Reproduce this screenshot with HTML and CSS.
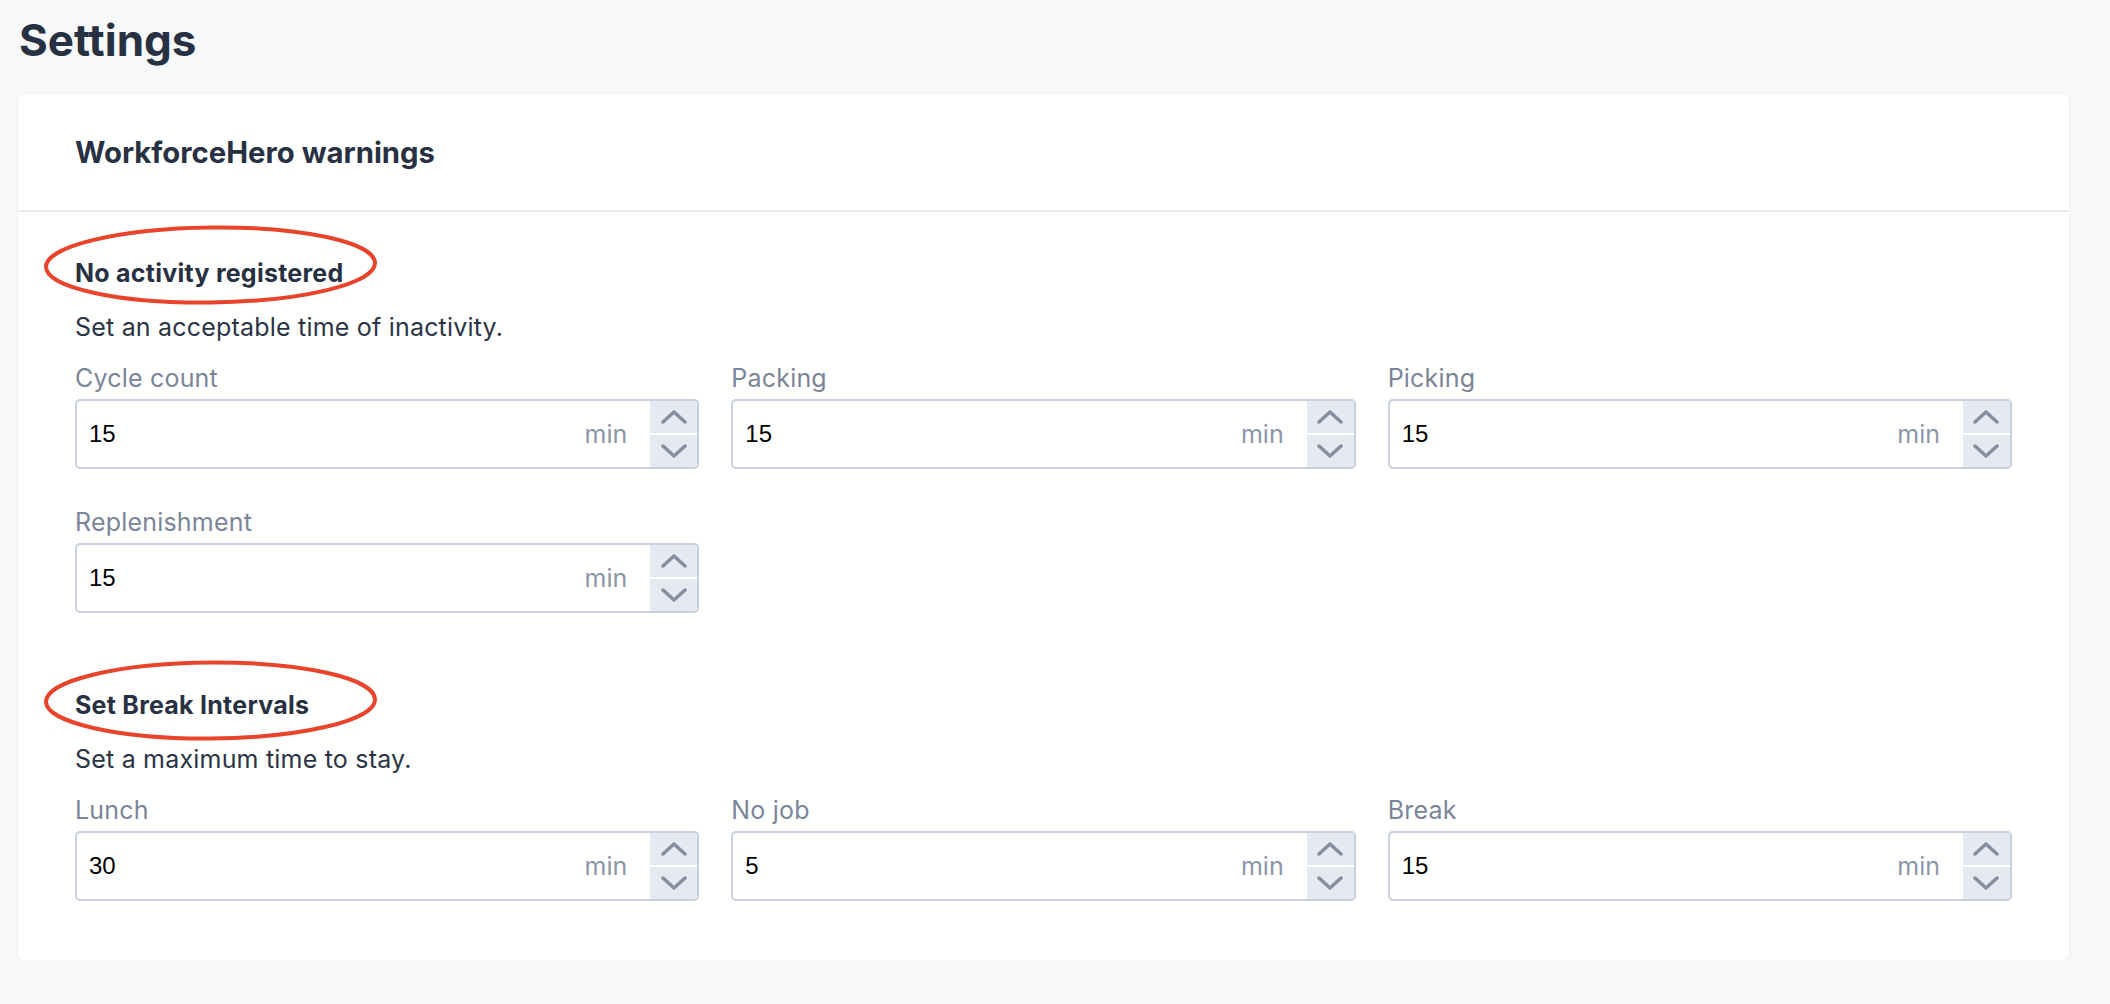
FILE: index.html
```html
<!DOCTYPE html>
<html lang="en">
<head>
<meta charset="utf-8">
<title>Settings</title>
<link rel="stylesheet" href="styles.css">
</head>
<body>
<div class="page">
  <h1 class="page-title">Settings</h1>
  <div class="card">
    <div class="card-header">
      <h2 class="card-title">WorkforceHero warnings</h2>
    </div>
    <div class="card-body">
      <section class="section">
        <div class="section-title-wrap">
          <h3 class="section-title">No activity registered</h3>
          <svg class="annot annot--a" width="333" height="80" viewBox="0 0 333 80"><ellipse cx="166.5" cy="40" rx="164.5" ry="37.5" fill="none" stroke="#e8442b" stroke-width="4"/></svg>
        </div>
        <p class="section-desc">Set an acceptable time of inactivity.</p>
        <div class="grid">
          <div class="field">
            <div class="field-label">Cycle count</div>
            <div class="input">
              <span class="input-value">15</span>
              <span class="input-unit">min</span>
              <div class="stepper">
                <div class="step"><svg width="26" height="14" viewBox="0 0 26 14"><path d="M2 12 L13 2 L24 12" fill="none" stroke="#868fa2" stroke-width="3.5" stroke-linecap="round" stroke-linejoin="round"/></svg></div>
                <div class="step"><svg width="26" height="14" viewBox="0 0 26 14"><path d="M2 2 L13 12 L24 2" fill="none" stroke="#868fa2" stroke-width="3.5" stroke-linecap="round" stroke-linejoin="round"/></svg></div>
              </div>
            </div>
          </div>
          <div class="field">
            <div class="field-label">Packing</div>
            <div class="input">
              <span class="input-value">15</span>
              <span class="input-unit">min</span>
              <div class="stepper">
                <div class="step"><svg width="26" height="14" viewBox="0 0 26 14"><path d="M2 12 L13 2 L24 12" fill="none" stroke="#868fa2" stroke-width="3.5" stroke-linecap="round" stroke-linejoin="round"/></svg></div>
                <div class="step"><svg width="26" height="14" viewBox="0 0 26 14"><path d="M2 2 L13 12 L24 2" fill="none" stroke="#868fa2" stroke-width="3.5" stroke-linecap="round" stroke-linejoin="round"/></svg></div>
              </div>
            </div>
          </div>
          <div class="field">
            <div class="field-label">Picking</div>
            <div class="input">
              <span class="input-value">15</span>
              <span class="input-unit">min</span>
              <div class="stepper">
                <div class="step"><svg width="26" height="14" viewBox="0 0 26 14"><path d="M2 12 L13 2 L24 12" fill="none" stroke="#868fa2" stroke-width="3.5" stroke-linecap="round" stroke-linejoin="round"/></svg></div>
                <div class="step"><svg width="26" height="14" viewBox="0 0 26 14"><path d="M2 2 L13 12 L24 2" fill="none" stroke="#868fa2" stroke-width="3.5" stroke-linecap="round" stroke-linejoin="round"/></svg></div>
              </div>
            </div>
          </div>
          <div class="field">
            <div class="field-label">Replenishment</div>
            <div class="input">
              <span class="input-value">15</span>
              <span class="input-unit">min</span>
              <div class="stepper">
                <div class="step"><svg width="26" height="14" viewBox="0 0 26 14"><path d="M2 12 L13 2 L24 12" fill="none" stroke="#868fa2" stroke-width="3.5" stroke-linecap="round" stroke-linejoin="round"/></svg></div>
                <div class="step"><svg width="26" height="14" viewBox="0 0 26 14"><path d="M2 2 L13 12 L24 2" fill="none" stroke="#868fa2" stroke-width="3.5" stroke-linecap="round" stroke-linejoin="round"/></svg></div>
              </div>
            </div>
          </div>
        </div>
      </section>

      <section class="section section--next">
        <div class="section-title-wrap">
          <h3 class="section-title">Set Break Intervals</h3>
          <svg class="annot annot--b" width="333" height="81" viewBox="0 0 333 81"><ellipse cx="166.5" cy="40.5" rx="164.5" ry="38" fill="none" stroke="#e8442b" stroke-width="4"/></svg>
        </div>
        <p class="section-desc">Set a maximum time to stay.</p>
        <div class="grid">
          <div class="field">
            <div class="field-label">Lunch</div>
            <div class="input">
              <span class="input-value">30</span>
              <span class="input-unit">min</span>
              <div class="stepper">
                <div class="step"><svg width="26" height="14" viewBox="0 0 26 14"><path d="M2 12 L13 2 L24 12" fill="none" stroke="#868fa2" stroke-width="3.5" stroke-linecap="round" stroke-linejoin="round"/></svg></div>
                <div class="step"><svg width="26" height="14" viewBox="0 0 26 14"><path d="M2 2 L13 12 L24 2" fill="none" stroke="#868fa2" stroke-width="3.5" stroke-linecap="round" stroke-linejoin="round"/></svg></div>
              </div>
            </div>
          </div>
          <div class="field">
            <div class="field-label">No job</div>
            <div class="input">
              <span class="input-value">5</span>
              <span class="input-unit">min</span>
              <div class="stepper">
                <div class="step"><svg width="26" height="14" viewBox="0 0 26 14"><path d="M2 12 L13 2 L24 12" fill="none" stroke="#868fa2" stroke-width="3.5" stroke-linecap="round" stroke-linejoin="round"/></svg></div>
                <div class="step"><svg width="26" height="14" viewBox="0 0 26 14"><path d="M2 2 L13 12 L24 2" fill="none" stroke="#868fa2" stroke-width="3.5" stroke-linecap="round" stroke-linejoin="round"/></svg></div>
              </div>
            </div>
          </div>
          <div class="field">
            <div class="field-label">Break</div>
            <div class="input">
              <span class="input-value">15</span>
              <span class="input-unit">min</span>
              <div class="stepper">
                <div class="step"><svg width="26" height="14" viewBox="0 0 26 14"><path d="M2 12 L13 2 L24 12" fill="none" stroke="#868fa2" stroke-width="3.5" stroke-linecap="round" stroke-linejoin="round"/></svg></div>
                <div class="step"><svg width="26" height="14" viewBox="0 0 26 14"><path d="M2 2 L13 12 L24 2" fill="none" stroke="#868fa2" stroke-width="3.5" stroke-linecap="round" stroke-linejoin="round"/></svg></div>
              </div>
            </div>
          </div>
        </div>
      </section>
    </div>
  </div>
</div>
</body>
</html>
```

FILE: styles.css
```css
* { box-sizing: border-box; }

html, body {
  margin: 0;
  padding: 0;
  background: #f7f8fa;
}

body {
  font-family: Inter, "Noto Sans", "Liberation Sans", sans-serif;
  color: #273142;
}

.page {
  padding: 0 41px 0 18px;
}

.page-title {
  margin: 13px 0 0 1px;
  font-size: 44px;
  line-height: 54px;
  font-weight: 700;
  color: #273142;
}

.card {
  margin-top: 27px;
  background: #ffffff;
  border-radius: 6px;
  box-shadow: 0 1px 4px rgba(30, 45, 80, 0.07);
}

.card-header {
  height: 118px;
  display: flex;
  align-items: center;
  padding: 0 57px;
  border-bottom: 2px solid #e7ebf2;
}

.card-title {
  margin: 0;
  font-size: 29.3px;
  font-weight: 700;
  color: #273142;
}

.card-body {
  padding: 44px 57px 59px;
}

.section--next {
  margin-top: 75px;
}

.section-title-wrap {
  position: relative;
}

.section-title {
  margin: 0;
  font-size: 25px;
  line-height: 34px;
  font-weight: 700;
  letter-spacing: 0.25px;
  color: #273142;
}

.annot {
  position: absolute;
  left: -31px;
  pointer-events: none;
}

.annot--a {
  top: -31px;
  transform: rotate(-0.7deg);
}

.annot--b {
  top: -28px;
  transform: rotate(-0.4deg);
}

.section-desc {
  margin: 20px 0 0;
  font-size: 25px;
  line-height: 34px;
  letter-spacing: 0.2px;
  color: #2a3445;
}

.grid {
  margin-top: 17px;
  display: grid;
  grid-template-columns: repeat(3, 1fr);
  column-gap: 32px;
  row-gap: 36px;
}

.field-label {
  font-size: 25px;
  line-height: 34px;
  letter-spacing: 0.2px;
  color: #7b8599;
}

.input {
  margin-top: 4px;
  height: 70px;
  display: flex;
  align-items: center;
  border: 2px solid #c8d0dd;
  border-radius: 5px;
  background: #fff;
  overflow: hidden;
}

.input-value {
  flex: 1;
  padding-left: 12px;
  font-family: "Liberation Sans", Arial, sans-serif;
  font-size: 24px;
  color: #000;
}

.input-unit {
  margin-right: 23px;
  font-size: 25px;
  color: #8c96a8;
}

.stepper {
  width: 47px;
  align-self: stretch;
  display: flex;
  flex-direction: column;
  gap: 2px;
}

.step {
  flex: 1;
  display: flex;
  align-items: center;
  justify-content: center;
  background: #e5e9f1;
}
```
